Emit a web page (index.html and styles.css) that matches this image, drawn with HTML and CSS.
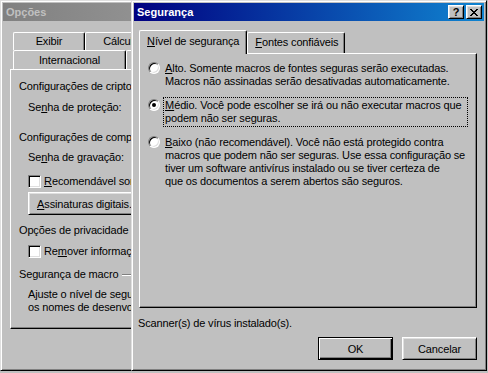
FILE: index.html
```html
<!DOCTYPE html>
<html lang="pt">
<head>
  <meta charset="UTF-8" />
  <title>Segurança</title>
  <link rel="stylesheet" href="styles.css">
</head>
<body>

  <div class="desk">

    <!-- Back window: Opções -->
    <div class="win win-back">
      <div class="title inactive">
        <span class="title-text">Opções</span>
      </div>
      <div class="back-body">
        <div class="tabrow row1">
          <div class="tab btab w72">Exibir</div>
          <div class="tab btab w72">Cálculo</div>
          <div class="tab btab w72">Edição</div>
        </div>
        <div class="tabrow row2">
          <div class="tab btab w113">Internacional</div>
          <div class="tab btab w72">Salvar</div>
        </div>
        <div class="panel back-panel">
          <div class="line">Configurações de criptografia para este documento</div>
          <div class="line indent f1">Se<u>n</u>ha de proteção:</div>
          <div class="line g2">Configurações de compartilhamento de arquivo para este documento</div>
          <div class="line indent f2">Se<u>n</u>ha de gravação:</div>
          <div class="checkrow c1"><span class="check"></span><span><u>R</u>ecomendável somente leitura</span></div>
          <div class="btn back-btn"><span><u>A</u>ssinaturas digitais...</span></div>
          <div class="line g3">Opções de privacidade</div>
          <div class="checkrow c2"><span class="check"></span><span>Re<u>m</u>over informações pessoais das propriedades do arquivo ao salvar</span></div>
          <div class="sep"><span>Segurança de macro</span><span class="etch"></span></div>
          <div class="line indent note">Ajuste o nível de segurança para abrir arquivos que possam conter vírus de macro<br>os nomes de desenvolvedores de macro confiáveis.</div>
        </div>
      </div>
    </div>

    <!-- Front window: Segurança -->
    <div class="win win-front">
      <div class="title">
        <span class="title-text">Segurança</span>
        <span class="tbtn help">?</span>
        <span class="tbtn close">
          <svg width="8" height="7" viewBox="0 0 8 7"><path d="M0 0h2v1h-2z M6 0h2v1h-2z M1 1h2v1h-2z M5 1h2v1h-2z M2 2h4v1h-4z M3 3h2v1h-2z M2 4h4v1h-4z M1 5h2v1h-2z M5 5h2v1h-2z M0 6h2v1h-2z M6 6h2v1h-2z" fill="#000"/></svg>
        </span>
      </div>
      <div class="front-body">
        <div class="tabrow front-tabs">
          <div class="tab selected"><u>N</u>ível de segurança</div>
          <div class="tab plain"><u>F</u>ontes confiáveis</div>
        </div>
        <div class="panel front-panel">
          <div class="option">
            <span class="radio"></span>
            <div class="label"><u>A</u>lto. Somente macros de fontes seguras serão executadas.<br>Macros não assinadas serão desativadas automaticamente.</div>
          </div>
          <div class="option">
            <span class="radio on"></span>
            <div class="label focus"><u>M</u>édio. Você pode escolher se irá ou não executar macros que<br>podem não ser seguras.</div>
          </div>
          <div class="option">
            <span class="radio"></span>
            <div class="label"><u>B</u>aixo (não recomendável). Você não está protegido contra<br>macros que podem não ser seguras. Use essa configuração se<br>tiver um software antivírus instalado ou se tiver certeza de<br>que os documentos a serem abertos são seguros.</div>
          </div>
        </div>
        <div class="status">Scanner(s) de vírus instalado(s).</div>
        <div class="buttons">
          <div class="btn default">OK</div>
          <div class="btn">Cancelar</div>
        </div>
      </div>
    </div>

  </div>

</body>
</html>
```

FILE: styles.css
```css
body {
  margin: 0;
  background: #c0c0c0;
  font-family: "Liberation Sans", Arial, sans-serif;
  font-size: 11px;
  letter-spacing: -0.15px;
  color: #000;
  overflow: hidden;
}

.desk {
  position: relative;
  width: 488px;
  height: 373px;
  overflow: hidden;
}

/* windows sit on the desktop */
.win {
  position: absolute;
  top: 0;
  box-sizing: border-box;
  height: 371px;
  padding: 2px;
  background: #c0c0c0;
  border: 1px solid;
  border-color: #dfdfdf #000 #000 #dfdfdf;
  box-shadow: inset 1px 1px #fff, inset -1px -1px #808080;
  display: flex;
  flex-direction: column;
}

.win-back {
  left: 0;
  width: 420px;
}

.win-front {
  left: 131px;
  width: 356px;
}

.title {
  height: 18px;
  flex: none;
  display: flex;
  align-items: center;
  padding: 0 2px 0 3px;
  font-weight: bold;
  letter-spacing: 0;
  color: #fff;
  background: linear-gradient(to right, #000080, #1084d0);
}

.title.inactive {
  color: #c0c0c0;
  background: linear-gradient(to right, #808080, #b5b5b5);
}

.title-text {
  flex: 1;
}

.tbtn {
  width: 16px;
  height: 14px;
  box-sizing: border-box;
  display: flex;
  align-items: center;
  justify-content: center;
  background: #c0c0c0;
  color: #000;
  border: 1px solid;
  border-color: #fff #000 #000 #fff;
  box-shadow: inset 1px 1px #dfdfdf, inset -1px -1px #808080;
  font-size: 11px;
  line-height: 11px;
}

.tbtn.help {
  margin-right: 2px;
}

/* tabs */
.tabrow {
  display: flex;
  align-items: flex-end;
}

.tab {
  box-sizing: border-box;
  background: #c0c0c0;
  line-height: 13px;
  white-space: nowrap;
  border: 1px solid;
  border-color: #fff #000 transparent #fff;
  border-bottom: 0;
  border-radius: 2px 2px 0 0;
  box-shadow: inset -1px 0 #808080;
}

.front-tabs {
  height: 23px;
}

.tab.selected {
  position: relative;
  z-index: 1;
  height: 24px;
  margin-bottom: -1px;
  padding: 4px 7px 0 7px;
}

.tab.plain {
  height: 21px;
  padding: 3px 6px 0 7px;
}

.panel {
  box-sizing: border-box;
  border: 1px solid;
  border-color: #fff #000 #000 #fff;
  box-shadow: inset -1px -1px #808080;
}

u {
  letter-spacing: 0;
  text-decoration: underline;
  text-underline-offset: 1px;
}

/* front window */
.front-body {
  padding: 9px 7px 0 5px;
}

.front-panel {
  width: 338px;
  height: 255px;
  padding: 6px 0 0 8px;
}

.option {
  display: flex;
  align-items: flex-start;
  gap: 3px;
  margin-bottom: 7px;
}

.radio {
  flex: none;
  width: 12px;
  height: 12px;
  margin-top: 2px;
  box-sizing: border-box;
  border-radius: 50%;
  border: 1px solid;
  border-color: #808080 #fff #fff #808080;
  background: #fff;
  box-shadow: inset 1px 1px #000, inset -1px -1px #dfdfdf;
  display: flex;
  align-items: center;
  justify-content: center;
}

.radio.on::after {
  content: "";
  width: 4px;
  height: 4px;
  border-radius: 50%;
  background: #000;
}

.label {
  width: 301px;
  padding: 1px;
  line-height: 13px;
  white-space: nowrap;
  border: 1px dotted transparent;
}

.label.focus {
  border-color: #000;
}

.status {
  margin: 9px 0 0 -1px;
  line-height: 13px;
}

.buttons {
  display: flex;
  justify-content: flex-end;
  gap: 9px;
  margin-top: 7px;
  width: 338px;
}

.btn {
  box-sizing: border-box;
  width: 75px;
  height: 23px;
  display: flex;
  align-items: center;
  justify-content: center;
  background: #c0c0c0;
  border: 1px solid;
  border-color: #fff #000 #000 #fff;
  box-shadow: inset 1px 1px #dfdfdf, inset -1px -1px #808080;
  white-space: nowrap;
}

.btn.default {
  border-color: #000;
  box-shadow: inset 1px 1px #fff, inset -1px -1px #000, inset -2px -2px #808080;
}

/* back window */
.back-body {
  padding: 11px 0 0 7px;
}

.row1 {
  height: 18px;
  padding-left: 3px;
}

.row1 .btab {
  height: 18px;
  padding-top: 2px;
}

.row2 {
  height: 19px;
  padding-left: 3px;
}

.row2 .btab {
  height: 19px;
  padding-top: 3px;
}

.btab {
  text-align: center;
}

.w72 {
  width: 72px;
}

.w113 {
  width: 113px;
}

.back-panel {
  height: 260px;
  padding: 10px 0 0 8px;
  white-space: nowrap;
}

.line {
  line-height: 13px;
}

.indent {
  padding-left: 9px;
}

.f1 {
  margin-top: 8px;
}

.g2 {
  margin-top: 17px;
}

.f2 {
  margin-top: 7px;
}

.checkrow {
  display: flex;
  align-items: center;
  gap: 3px;
  padding-left: 9px;
  height: 13px;
  line-height: 13px;
}

.c1 {
  margin-top: 11px;
}

.c2 {
  margin-top: 8px;
}

.check {
  flex: none;
  width: 13px;
  height: 13px;
  box-sizing: border-box;
  border: 1px solid;
  border-color: #808080 #fff #fff #808080;
  background: #fff;
  box-shadow: inset 1px 1px #000, inset -1px -1px #dfdfdf;
}

.back-btn {
  width: 140px;
  margin: 4px 0 0 9px;
  justify-content: flex-start;
  padding-left: 8px;
}

.g3 {
  margin-top: 9px;
}

.sep {
  display: flex;
  align-items: center;
  gap: 4px;
  margin-top: 10px;
  line-height: 13px;
}

.etch {
  flex: 1;
  height: 0;
  border-top: 1px solid #808080;
  border-bottom: 1px solid #fff;
}

.note {
  margin-top: 7px;
}
```
